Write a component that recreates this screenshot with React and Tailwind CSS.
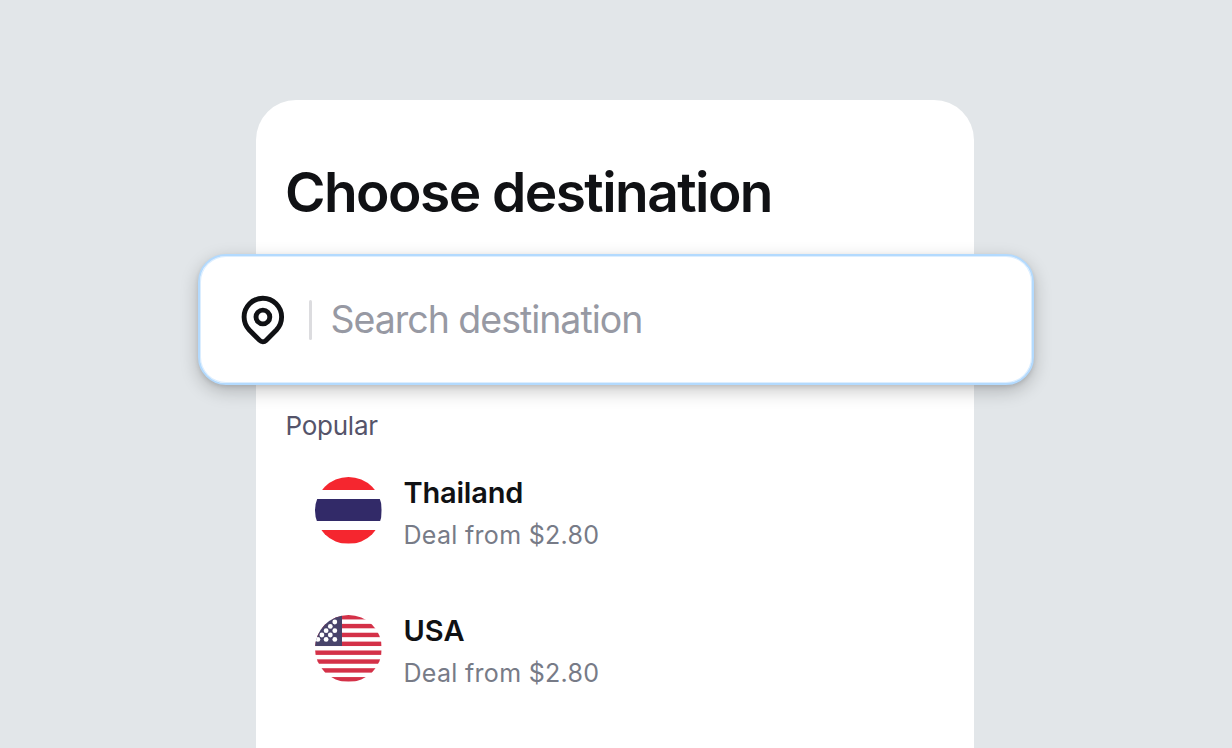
const ThailandFlag = () => (
  <svg viewBox="0 0 66.5 66.5" className="h-[66.5px] w-[66.5px] shrink-0 rounded-full">
    <rect width="66.5" height="66.5" fill="#fff" />
    <rect width="66.5" height="13" fill="#f5262f" />
    <rect y="22" width="66.5" height="22" fill="#322a68" />
    <rect y="53" width="66.5" height="13.5" fill="#f5262f" />
  </svg>
)

const stripes = [0, 2, 4, 6, 8, 10, 12, 14]
const stars = [
  [19.8, 7], [15.3, 11.4], [11.1, 15.7], [19.8, 15.7], [6.9, 20],
  [15.3, 20], [2.9, 24.4], [11.1, 24.4], [19.8, 24.4]
]

const UsaFlag = () => (
  <svg viewBox="0 0 66.5 66.5" className="h-[66.5px] w-[66.5px] shrink-0 rounded-full">
    <rect width="66.5" height="66.5" fill="#fff" />
    {stripes.map((n) => (
      <rect key={n} y={n * 4.433} width="66.5" height="4.433" fill="#d43148" />
    ))}
    <rect width="27" height="31" fill="#48436a" />
    {stars.map(([x, y], index) => (
      <circle key={index} cx={x} cy={y} r="2.4" fill="#fff" />
    ))}
  </svg>
)

const PinIcon = () => (
  <svg
    viewBox="0 0 44 50"
    className="h-[50px] w-[44px] shrink-0"
    fill="none"
    stroke="#101114"
    strokeWidth="4.9"
    strokeLinejoin="round"
  >
    <path d="M3.1 22a18.75 18.75 0 0 1 37.5 0c0 5.2-2 9.6-5.2 13L25 45.4a4.4 4.4 0 0 1-6.3 0L8.3 35C5.1 31.600 3.1 27.200 3.1 22z" />
    <circle cx="21.9" cy="22" r="6.9" />
  </svg>
)

const destinations = [
  { name: "Thailand", deal: "Deal from $2.80", flag: ThailandFlag, spacing: "tracking-[-0.2px]" },
  { name: "USA", deal: "Deal from $2.80", flag: UsaFlag, spacing: "tracking-[0px]" }
]

const App = () => {
  return (
    <main className="h-[748px] w-[1232px] overflow-hidden bg-[#e2e6e9] pl-[256px] pt-[100px] font-['Inter',sans-serif]">
      <section className="h-[700px] w-[718px] rounded-t-[40px] bg-white pt-[59px]">
        <h1 className="ml-[29px] h-[95px] whitespace-nowrap text-[55px] font-semibold leading-[66px] tracking-[-1.55px] text-[#101114]">
          Choose destination
        </h1>

        {/* Search field, wider than the card */}
        <div className="-ml-[58px] flex h-[131px] w-[836px] items-center rounded-[28px] border-2 border-[#b3dafe] bg-white pl-[41px] shadow-[inset_0_0_0_1px_#dceeff,0_2px_4px_rgba(0,0,0,0.1),0_6px_18px_rgba(0,0,0,0.22)]">
          <PinIcon />
          <div className="ml-[24px] h-[40px] w-[3px] rounded-full bg-[#dcdcdf]" />
          <span className="ml-[18.5px] whitespace-nowrap text-[37.5px] leading-[46px] tracking-[-1.02px] text-[#9799a3]">
            Search destination
          </span>
        </div>

        <h2 className="ml-[29.5px] mt-[25px] text-[26px] font-normal leading-[32px] tracking-[-0.25px] text-[#55546a]">
          Popular
        </h2>

        <ul className="ml-[59px] mt-[35px] flex flex-col gap-[71.5px]">
          {destinations.map((item) => (
            <li key={item.name} className="flex h-[66.5px] items-center gap-[22px]">
              <item.flag />
              <div className="whitespace-nowrap pt-[9px]">
                <p className={`text-[29px] font-semibold leading-[42px] text-[#101114] ${item.spacing}`}>{item.name}</p>
                <p className="text-[25px] leading-[43px] tracking-[0.3px] text-[#777b87]">{item.deal}</p>
              </div>
            </li>
          ))}
        </ul>
      </section>
    </main>
  )
}

export default App
